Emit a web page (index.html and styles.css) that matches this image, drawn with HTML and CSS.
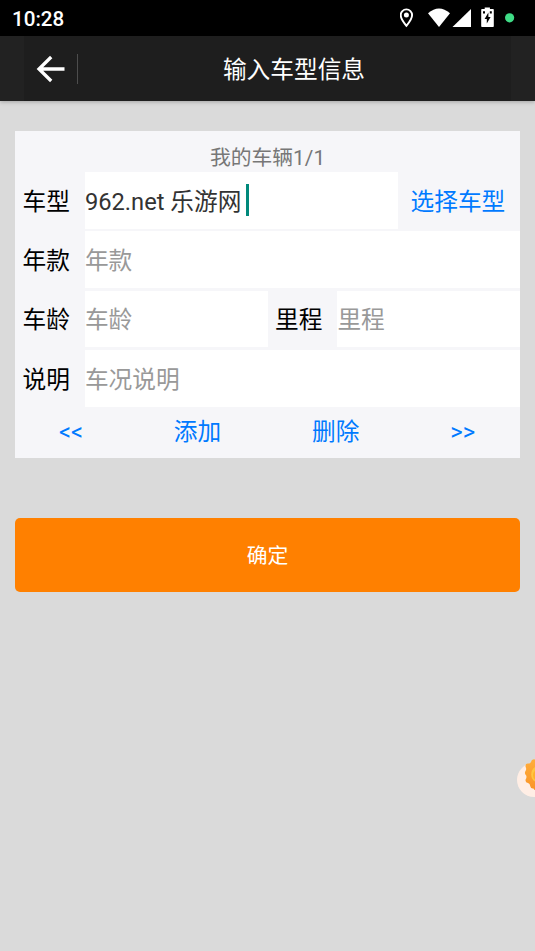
FILE: index.html
```html
<!DOCTYPE html>
<html lang="zh-CN">
<head>
<meta charset="utf-8">
<title>输入车型信息</title>
<link rel="stylesheet" href="styles.css">
</head>
<body>
<div class="status">
  <span class="time">10:28</span>
  <svg class="status-icons" width="120" height="36" viewBox="0 0 120 36" fill="#fff">
    <path d="M6.400 9.400a5.700 5.700 0 0 1 5.700 5.700c0 4.200-5.700 10.700-5.700 10.700S.7 19.300.7 15.100a5.700 5.700 0 0 1 5.700-5.700z" fill="none" stroke="#fff" stroke-width="1.900"/>
    <circle cx="6.400" cy="15" r="2.500"/>
    <path d="M28 13.200Q39 3.800 50 13.200L39 27z"/>
    <path d="M71 9v18H52.500z"/>
    <path d="M84.700 7.500h5.200V9H93q.8 0 .8.800v16.400q0 .8-.8.800H82q-.8 0-.8-.8V9.800q0-.8.8-.8h2.700z"/>
    <path d="M88.400 12.500L84.600 19h2.200v4.500l3.800-6.500h-2.200zM83 11.300h2v2.200h-2zM89.800 11.300h2v2.200h-2z" fill="#000"/>
    <circle cx="109.600" cy="17.800" r="4.600" fill="#3fdc86"/>
  </svg>
</div>
<header class="bar">
  <div class="bar-inner">
    <svg class="back" width="30" height="28" viewBox="0 0 30 28" fill="none" stroke="#fff" stroke-width="3.300"><path d="M15.200 2L3 14l12.200 12M3 14h25.500"/></svg>
    <span class="divider"></span>
    <h1 class="title">输入车型信息</h1>
  </div>
</header>
<main class="page">
  <section class="card">
    <div class="count">我的车辆1/1</div>
    <div class="rows">
      <div class="row"><span class="label">车型</span><div class="field value">962.net 乐游网<i class="caret"></i></div><a class="pick">选择车型</a></div>
      <div class="row"><span class="label">年款</span><div class="field">年款</div></div>
      <div class="row split"><span class="label">车龄</span><div class="field">车龄</div><span class="label">里程</span><div class="field">里程</div></div>
      <div class="row"><span class="label">说明</span><div class="field">车况说明</div></div>
    </div>
    <nav class="actions"><a>&lt;&lt;</a><a>添加</a><a>删除</a><a>&gt;&gt;</a></nav>
  </section>
  <button class="submit">确定</button>
</main>
<div class="float">
  <svg width="18" height="40" viewBox="0 0 18 40">
    <defs><linearGradient id="gear" x1="0" y1="0" x2="0" y2="1"><stop offset="0" stop-color="#ffae3c"/><stop offset="1" stop-color="#fa9428"/></linearGradient></defs>
    <circle cx="17" cy="22" r="17" fill="#ffeee5"/>
    <path d="M18 1.500Q14.500 .8 14 4Q13 6 10.800 5.500Q8 5.500 8.600 9Q9.800 11 8.500 13Q7 15.500 9.200 17.500Q10 19.500 8.600 21.500Q8 24.500 11 25Q13 25.500 13.200 28Q13.800 31 16.500 30.500Q17.300 32 18 32z" fill="url(#gear)"/>
    <path d="M18 9Q14.200 11.500 14.200 16.500Q14.200 21 18 23.500z" fill="#ffc640"/>
    <path d="M18 12.500q-2 2-2 5t2 4z" fill="#ffb02d"/>
  </svg>
</div>
</body>
</html>
```

FILE: styles.css
```css
* { box-sizing: border-box; }
body {
  margin: 0;
  width: 535px;
  height: 951px;
  overflow: hidden;
  position: relative;
  background: #dadada;
  font-family: Roboto, "Noto Sans CJK SC", sans-serif;
  font-size: 23.700px;
}
.status {
  height: 36px;
  background: #000;
  color: #fff;
  display: flex;
  justify-content: space-between;
  padding-left: 12px;
  padding-right: 15px;
}
.time { font-size: 20.600px; line-height: 38px; font-weight: 500; }
.status-icons { display: block; }
.bar {
  height: 65px;
  padding: 0 24px;
  background: #222;
  box-shadow: 0 1px 4px rgba(0, 0, 0, .25);
}
.bar-inner {
  height: 65px;
  background: #1e1e1e;
  display: grid;
  grid-template-columns: 53px 1px 1fr;
  grid-template-rows: 65px;
  align-items: center;
}
.back { margin-left: 12px; }
.divider { height: 30px; background: #4d4d4d; }
.title {
  margin: 0;
  height: 65px;
  color: #fff;
  font-size: 23.700px;
  font-weight: 400;
  line-height: 68px;
  text-align: center;
  padding-right: 1px;
}
.page { padding: 30px 15px 0; }
.card { background: #f6f6f9; height: 327.400px; }
.count {
  height: 41px;
  line-height: 54px;
  font-size: 20.800px;
  color: #777;
  text-align: center;
}
.rows { display: flex; flex-direction: column; gap: 2.800px; }
.row { display: flex; height: 56.600px; line-height: 60px; }
.split { line-height: 59.400px; }
.label { width: 69.500px; padding-left: 7.500px; color: #000; flex: none; }
.field { flex: 1; background: #fff; color: #999; min-width: 0; padding-left: .4px; }
.value { color: #333; display: flex; }
.caret { width: 3px; height: 32px; margin: 12px 0 0 4.500px; background: #00897b; }
.pick { width: 122px; padding-left: 12.500px; color: #007aff; }
.actions {
  display: flex;
  justify-content: space-around;
  height: 51px;
  line-height: 50.500px;
  margin: 0 -.5px 0 -1.500px;
  color: #007aff;
}
.submit {
  display: block;
  width: 100%;
  height: 74px;
  margin-top: 59.600px;
  padding: 0 0 1px;
  border: 0;
  border-radius: 5px;
  background: #ff8000;
  color: #fff;
  font: inherit;
  font-size: 20.800px;
}
.float { position: absolute; right: 0; top: 758px; height: 40px; }
.float svg { display: block; }
```
